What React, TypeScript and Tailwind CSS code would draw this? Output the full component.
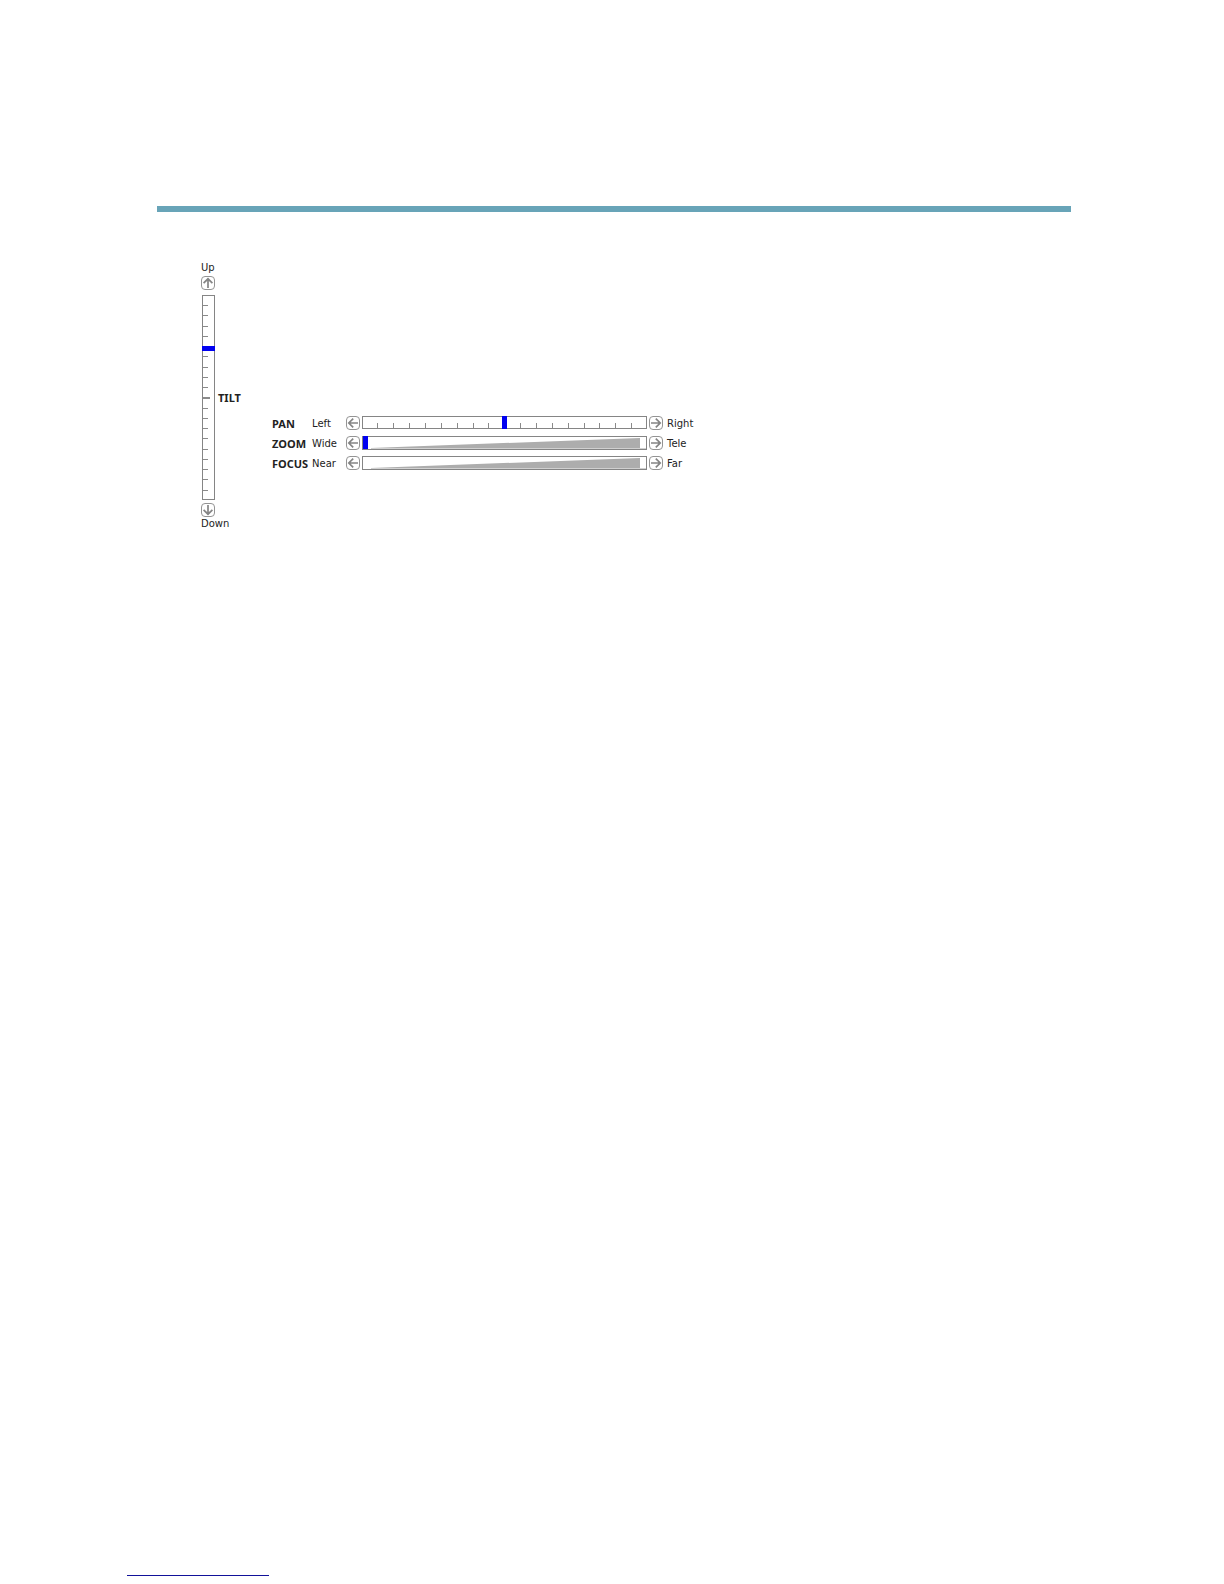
import { useState } from 'react';

type Direction = 'up' | 'down' | 'left' | 'right';

const ROTATION: Record<Direction, string> = {
  up: '',
  down: 'rotate-180',
  left: '-rotate-90',
  right: 'rotate-90',
};

function ArrowButton({ direction, label, onClick }: { direction: Direction; label: string; onClick: () => void }) {
  return (
    <button
      type="button"
      aria-label={label}
      onClick={onClick}
      className="flex size-[14px] shrink-0 items-center justify-center rounded-[4px] border border-[#949494] bg-white text-[#858585]"
    >
      <svg viewBox="0 0 12 12" className={`size-3 shrink-0 ${ROTATION[direction]}`} fill="none" stroke="currentColor" strokeWidth="1.7">
        <path d="M6 11V1.8M1.6 6.2L6 1.8L10.4 6.2" />
      </svg>
    </button>
  );
}

function TiltTicks() {
  return (
    <svg viewBox="0 0 11 203" className="absolute inset-0 size-full" stroke="#8a8a8a" preserveAspectRatio="none" shapeRendering="crispEdges">
      {Array.from({ length: 19 }, (_, i) => {
        const y = Math.floor((i + 1) * 10.25 - 0.6) + 0.5;
        return <line key={i} x1="0" x2={i === 9 ? 7 : 5} y1={y} y2={y} strokeWidth={i === 9 ? 2 : 1} />;
      })}
    </svg>
  );
}

function PanTicks() {
  return (
    <svg viewBox="0 0 283 11" className="absolute inset-0 size-full" stroke="#8a8a8a" preserveAspectRatio="none" shapeRendering="crispEdges">
      {Array.from({ length: 17 }, (_, i) => {
        const x = Math.floor((i + 1) * 15.85 - 0.9) + 0.5;
        return <line key={i} x1={x} x2={x} y1="6" y2="11" />;
      })}
    </svg>
  );
}

function Wedge() {
  return (
    <svg viewBox="0 0 283 12" className="absolute inset-0 size-full" preserveAspectRatio="none">
      <path d="M8 11L277 1V11Z" fill="#adadad" />
      <path d="M8 11H283V12H8Z" fill="#d0d0d0" />
    </svg>
  );
}

const horizontalInput =
  'absolute -inset-y-px inset-x-0 m-0 block w-full cursor-pointer appearance-none bg-transparent outline-none [&::-webkit-slider-thumb]:h-[13px] [&::-webkit-slider-thumb]:w-[5px] [&::-webkit-slider-thumb]:appearance-none [&::-webkit-slider-thumb]:bg-[#0000f0]';

type Kind = 'PAN' | 'ZOOM' | 'FOCUS';

function ControlRow({ name, low, high, start }: { name: Kind; low: string; high: string; start: number }) {
  const [value, setValue] = useState(start);
  const id = name.toLowerCase();
  const step = (by: number) => setValue((v) => Math.min(100, Math.max(0, v + by)));
  return (
    <div className="flex h-[15px] items-center">
      <label htmlFor={id} className="w-10 shrink-0 pt-0.5 font-['Noto_Sans',sans-serif] text-[11px] leading-[13px] font-bold">
        {name}
      </label>
      <span className="w-[34px] shrink-0 pt-0.5">{low}</span>
      <ArrowButton direction="left" label={`${name} ${low}`} onClick={() => step(-1)} />
      <div
        className={`relative mx-0.5 w-[285px] border border-[#858585] ${name === 'PAN' ? 'h-[13px]' : 'h-[14px]'}`}
      >
        {name === 'PAN' ? <PanTicks /> : <Wedge />}
        <input
          id={id}
          type="range"
          min={0}
          max={100}
          value={value}
          onChange={(e) => setValue(Number(e.target.value))}
          className={`${horizontalInput} ${name === 'FOCUS' ? '[&::-webkit-slider-thumb]:opacity-0' : ''}`}
        />
      </div>
      <ArrowButton direction="right" label={`${name} ${high}`} onClick={() => step(1)} />
      <span className="pt-0.5 pl-1">{high}</span>
    </div>
  );
}

export default function App() {
  const [tilt, setTilt] = useState(75);
  const step = (by: number) => setTilt((v) => Math.min(100, Math.max(0, v + by)));
  return (
    <div className="flex min-h-screen flex-col bg-white pt-[206px] pb-2 font-['DejaVu_Sans',sans-serif] text-[10px] leading-3 text-[#222]">
      <hr className="mr-[153px] ml-[157px] h-1.5 border-0 bg-[#68a4b8]" />
      <main className="mt-[50px] ml-[201px] flex items-start">
        <section className="flex w-[71px] flex-col items-start">
          <span>Up</span>
          <div className="mt-0.5">
            <ArrowButton direction="up" label="Tilt up" onClick={() => step(1)} />
          </div>
          <div className="mt-[5px] ml-px flex items-center gap-[3px]">
            <div className="relative h-[205px] w-[13px] border border-[#858585]">
              <TiltTicks />
              <input
                id="tilt"
                type="range"
                min={0}
                max={100}
                value={tilt}
                onChange={(e) => setTilt(Number(e.target.value))}
                className="absolute inset-y-0 -left-px m-0 block h-full w-[13px] cursor-pointer appearance-none bg-transparent outline-none [direction:rtl] [writing-mode:vertical-lr] [&::-webkit-slider-thumb]:h-[5px] [&::-webkit-slider-thumb]:w-[13px] [&::-webkit-slider-thumb]:appearance-none [&::-webkit-slider-thumb]:bg-[#0000f0]"
              />
            </div>
            <label htmlFor="tilt" className="font-['Noto_Sans',sans-serif] text-[11px] leading-[13px] font-bold">
              TILT
            </label>
          </div>
          <div className="mt-[3px]">
            <ArrowButton direction="down" label="Tilt down" onClick={() => step(-1)} />
          </div>
          <span className="mt-px">Down</span>
        </section>
        <section className="mt-[153px] flex flex-col gap-[5px]">
          <ControlRow name="PAN" low="Left" high="Right" start={50} />
          <ControlRow name="ZOOM" low="Wide" high="Tele" start={0} />
          <ControlRow name="FOCUS" low="Near" high="Far" start={0} />
        </section>
      </main>
      <footer className="mt-auto ml-[127px]">
        <hr className="h-px w-[142px] border-0 bg-[#12129a]" />
      </footer>
    </div>
  );
}
